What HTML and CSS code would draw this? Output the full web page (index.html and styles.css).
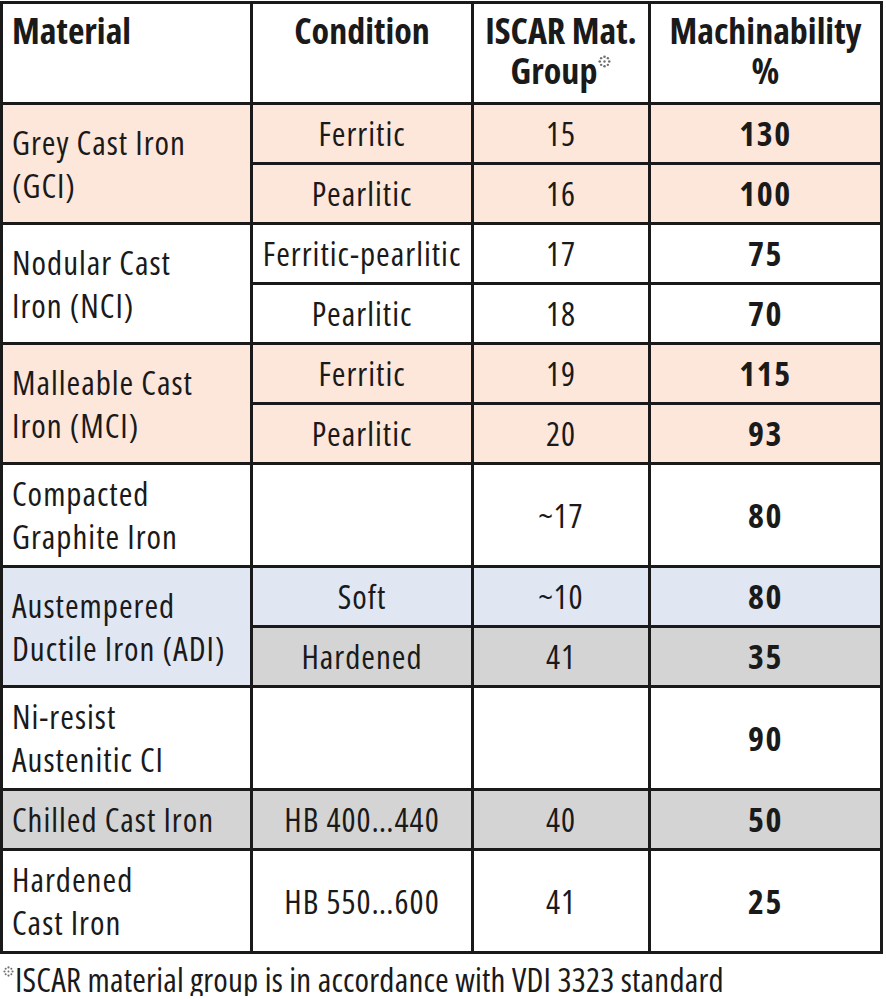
FILE: index.html
```html
<!DOCTYPE html>
<html lang="en">
<head>
<meta charset="utf-8">
<title>Cast Iron Machinability</title>
<link rel="stylesheet" href="styles.css">
</head>
<body>
<table class="mtable">
  <colgroup>
    <col class="c-mat">
    <col class="c-cond">
    <col class="c-grp">
    <col class="c-mach">
  </colgroup>
  <thead>
    <tr class="r-head">
      <th class="h-left">Material</th>
      <th>Condition</th>
      <th>ISCAR Mat.<br>Group<svg class="star" viewBox="0 0 12 12" width="13" height="13"><g fill="#707070"><circle cx="6" cy="1.6" r="1.2"/><circle cx="6" cy="10.4" r="1.2"/><circle cx="1.6" cy="6" r="1.2"/><circle cx="10.4" cy="6" r="1.2"/><circle cx="2.9" cy="2.9" r="1.1"/><circle cx="9.1" cy="2.9" r="1.1"/><circle cx="2.9" cy="9.1" r="1.1"/><circle cx="9.1" cy="9.1" r="1.1"/><circle cx="6" cy="6" r="1.1"/></g></svg></th>
      <th>Machinability<br>%</th>
    </tr>
  </thead>
  <tbody>
    <tr class="r-s peach">
      <td class="mat" rowspan="2">Grey Cast Iron<br>(GCI)</td>
      <td>Ferritic</td><td>15</td><td class="val">130</td>
    </tr>
    <tr class="r-s peach">
      <td>Pearlitic</td><td>16</td><td class="val">100</td>
    </tr>
    <tr class="r-s">
      <td class="mat" rowspan="2">Nodular Cast<br>Iron (NCI)</td>
      <td class="nowrap">Ferritic-pearlitic</td><td>17</td><td class="val">75</td>
    </tr>
    <tr class="r-s">
      <td>Pearlitic</td><td>18</td><td class="val">70</td>
    </tr>
    <tr class="r-s peach">
      <td class="mat" rowspan="2">Malleable Cast<br>Iron (MCI)</td>
      <td>Ferritic</td><td>19</td><td class="val">115</td>
    </tr>
    <tr class="r-s peach">
      <td>Pearlitic</td><td>20</td><td class="val">93</td>
    </tr>
    <tr class="r-t">
      <td class="mat">Compacted<br>Graphite Iron</td>
      <td></td><td>~17</td><td class="val">80</td>
    </tr>
    <tr class="r-s blue">
      <td class="mat nowrap" rowspan="2">Austempered<br>Ductile Iron (ADI)</td>
      <td>Soft</td><td>~10</td><td class="val">80</td>
    </tr>
    <tr class="r-s grey">
      <td>Hardened</td><td>41</td><td class="val">35</td>
    </tr>
    <tr class="r-t">
      <td class="mat">Ni-resist<br>Austenitic CI</td>
      <td></td><td></td><td class="val">90</td>
    </tr>
    <tr class="r-s grey">
      <td class="mat nowrap">Chilled Cast Iron</td>
      <td>HB 400…440</td><td>40</td><td class="val">50</td>
    </tr>
    <tr class="r-t">
      <td class="mat">Hardened<br>Cast Iron</td>
      <td>HB 550…600</td><td>41</td><td class="val">25</td>
    </tr>
  </tbody>
</table>
<p class="footnote"><svg class="star star-foot" viewBox="0 0 12 12" width="11" height="11"><g fill="#707070"><circle cx="6" cy="1.6" r="1.2"/><circle cx="6" cy="10.4" r="1.2"/><circle cx="1.6" cy="6" r="1.2"/><circle cx="10.4" cy="6" r="1.2"/><circle cx="2.9" cy="2.9" r="1.1"/><circle cx="9.1" cy="2.9" r="1.1"/><circle cx="2.9" cy="9.1" r="1.1"/><circle cx="9.1" cy="9.1" r="1.1"/><circle cx="6" cy="6" r="1.1"/></g></svg>ISCAR material group is in accordance with VDI 3323 standard</p>
</body>
</html>
```

FILE: styles.css
```css
html, body {
  margin: 0;
  padding: 0;
  background: #ffffff;
}

body {
  font-family: "Open Sans", "Noto Sans", "DejaVu Sans Condensed", sans-serif;
  font-stretch: condensed;
  color: #1a1a1a;
}

.mtable {
  border-collapse: collapse;
  table-layout: fixed;
  width: 883px;
  margin-top: 1px;
  border: 3px solid #1a1a1a;
}

.c-mat { width: 250px; }
.c-cond { width: 221px; }
.c-grp { width: 177px; }
.c-mach { width: 232px; }

.mtable th,
.mtable td {
  border: 3px solid #1a1a1a;
  padding: 0;
  text-align: center;
  vertical-align: middle;
  font-size: 33px;
  letter-spacing: 1px;
  line-height: 43px;
  font-weight: normal;
  overflow: hidden;
}

.mtable th {
  vertical-align: top;
  font-weight: bold;
  font-size: 36px;
  letter-spacing: 0;
  line-height: 40px;
  padding-top: 7px;
}

.r-head { height: 101px; }
.r-s { height: 60px; }
.r-t { height: 103px; }

.mtable .h-left,
.mtable .mat {
  text-align: left;
  padding-left: 9px;
}

.nowrap { white-space: nowrap; }

.mtable .val {
  font-weight: bold;
  font-size: 34px;
  letter-spacing: 1.5px;
}

.peach td { background: #fde6da; }
.blue td { background: #e1e6f3; }
.grey td { background: #d4d4d4; }

.star {
  vertical-align: top;
  margin-top: 4px;
  margin-left: 1px;
}

.star-foot {
  margin-top: 2px;
  margin-left: 3px;
  margin-right: 1px;
}

.footnote {
  margin: 10px 0 0 0;
  font-size: 33px;
  letter-spacing: 0.2px;
  line-height: 32px;
}
```
